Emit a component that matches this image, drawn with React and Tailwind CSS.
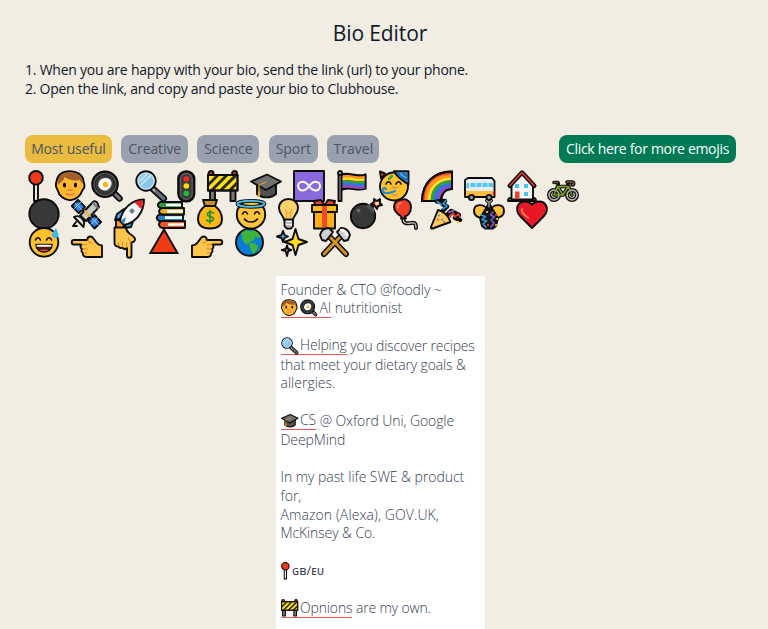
import React from "react";

const INK = "#0c0c0c";

function Svg({ children, className = "h-8 w-8" }) {
  return (
    <svg viewBox="0 0 32 32" className={className + " shrink-0 overflow-visible"} fill="none" stroke={INK} strokeWidth="1.9" strokeLinejoin="round" strokeLinecap="round">
      {children}
    </svg>
  );
}

const Pin = (p) => (
  <Svg {...p}>
    <path d="M6 12h4v19H6z" fill="#d4d4d4" />
    <path d="M8 14v14" stroke="#fff" strokeWidth="1" />
    <circle cx="8" cy="7.800" r="6.800" fill="#ef3a18" />
  </Svg>
);
const Face = (p) => (
  <Svg {...p}>
    <path d="M1.500 11C3 3 9 1.200 15 1.200S28 4 28.600 12c1.300 3 1 6-1 8-2 6-7 10.200-12.600 10.200S4 26 2.600 20C.5 17 .5 14 1.500 11z" fill="#ffb92e" />
    <path d="M2.600 15C2 6 8 2.200 15 2.200S27.500 6 27.600 14l-3-4c-5 1-11 0-15-3-1 4-4 5-7 8z" fill="#a45d2c" stroke="none" />
    <ellipse cx="9.500" cy="15" rx="1.600" ry="2.600" fill={INK} stroke="none" />
    <ellipse cx="20.500" cy="15" rx="1.600" ry="2.600" fill={INK} stroke="none" />
    <path d="M13 20h4M11.500 24c2 1 5 1 7 0" stroke="#ef7348" strokeWidth="1.700" />
  </Svg>
);
const Pan = (p) => (
  <Svg {...p}>
    <path d="M22 22l6.500 6.500" stroke={INK} strokeWidth="6.500" />
    <path d="M23 23l5.500 5.500" stroke="#777" strokeWidth="3" />
    <circle cx="14" cy="14.300" r="12.700" fill="#555" strokeWidth="2.200" />
    <circle cx="14" cy="14.300" r="9.800" fill="#393939" stroke="#222" strokeWidth="1" />
    <path d="M14 8c4-.5 7 2.500 6.500 6S17 21 13.500 20.500 6.500 17 7.500 13.500 10 8.500 14 8z" fill="#fff" stroke="none" />
    <circle cx="14.500" cy="14.500" r="2.700" fill="#ffb510" stroke="none" />
  </Svg>
);
const Magnifier = (p) => (
  <Svg {...p}>
    <path d="M18 19l10.500 9.500" strokeWidth="7" />
    <path d="M18 19l2 2" stroke="#aaa" strokeWidth="3" />
    <path d="M21.500 22l7 6.500" stroke="#66717d" strokeWidth="3.600" />
    <circle cx="11" cy="11" r="9.700" fill="#87c5ea" />
    <circle cx="11" cy="11" r="8" stroke="#d7e6ee" strokeWidth="1.200" />
    <path d="M5.500 10.500l6-6M6.500 14.500l9-9" stroke="#bee4f5" strokeWidth="1.800" />
  </Svg>
);
const Traffic = (p) => (
  <Svg {...p}>
    <rect x="1.300" y="1.300" width="16" height="30" rx="7.500" fill="#3c3c3c" strokeWidth="2.200" />
    <rect x="3.500" y="3.500" width="11.600" height="25.600" rx="5.500" stroke="#777" strokeWidth=".7" />
    <g stroke="none">
      <circle cx="9.300" cy="9" r="2.800" fill="#f42821" />
      <circle cx="9.300" cy="16" r="2.800" fill="#ffdc15" />
      <circle cx="9.300" cy="23.200" r="2.800" fill="#1bbb33" />
    </g>
  </Svg>
);
const Barrier = (p) => (
  <Svg {...p}>
    <path d="M3 20h5v11H3zM23.500 20h5v11h-5z" fill="#777" />
    <circle cx="4" cy="3.500" r="2.500" fill="#c62f27" />
    <circle cx="27.500" cy="3.500" r="2.500" fill="#c62f27" />
    <path d="M1 5h29.500v15.500H1z" fill="#ffdf19" />
    <path d="M2 12l6-6h4L2 16zM3 20L17 6h4L7 20zM12 20L26 6h3.500v1L16 20zM21 20l8.500-8.500v4L25 20z" fill="#292929" stroke="none" />
    <path d="M1 5h29.500v15.500H1z" />
  </Svg>
);
const Cap = (p) => (
  <Svg {...p}>
    <path d="M7 13v11c5 4.500 14 4.500 19 0V13z" fill="#505050" />
    <path d="M1 11.500L17 4.500l14 7-15 8.500z" fill="#707070" />
    <path d="M16 12l-7 3v9" stroke="#e89c20" strokeWidth="1.200" />
    <path d="M9 22v4" stroke="#e89c20" strokeWidth="2.200" />
  </Svg>
);
const Infinity8 = (p) => (
  <Svg {...p}>
    <path d="M1 1h30v30H1z" fill="#8a69de" />
    <path d="M16 16c-3-4-5-5-7.500-5a5 5 0 000 10c2.500 0 4.500-1 7.500-5s5-5 7.500-5a5 5 0 010 10c-2.500 0-4.500-1-7.500-5z" stroke="#fff" strokeWidth="2.200" transform="translate(2 2) scale(.88)" />
  </Svg>
);
const Flag = (p) => (
  <Svg {...p}>
    <path d="M4 5c8-4 14 3 24.500-.5v14C19 22 12 15 4 20z" fill="#ef3340" strokeWidth="2.200" />
    <g strokeWidth="2.400" strokeLinecap="butt">
      <path d="M5 7c8-3 14 3 22.600 0" stroke="#ff931e" />
      <path d="M5 9.300c8-3 14 3 22.600 0" stroke="#ffe020" />
      <path d="M5 12c8-3 14 3 22.600 0" stroke="#25a744" />
      <path d="M5 14.400c8-3 14 3 22.600 0" stroke="#2878ed" />
      <path d="M5 17c8-3 14 3 22.600 0" stroke="#8950c6" />
    </g>
    <path d="M1.500 3.500h3V31h-3z" fill="#999" />
    <circle cx="3" cy="3" r="2" fill="#bbb" />
  </Svg>
);
const Party = (p) => (
  <Svg {...p}>
    <circle cx="16" cy="16.500" r="14" fill="#ffc02e" />
    <path d="M16 1.200h14.500v13C28 13 19 7 16 1.200z" fill="#4a9fe0" />
    <path d="M20 2.500c1 4 5 6.500 9.500 7.500M25 2.500c1 2 2.500 3 4.500 3.500" stroke="#1768ad" strokeWidth="2" />
    <path d="M2 1.500l5 2-4 5z" fill="#f36c21" />
    <path d="M11 9l3-3" stroke="#28a745" strokeWidth="2.500" />
    <path d="M8 14c1-3 4-3 5 0M18 14c1-3 4-3 5 0" strokeWidth="1.600" />
    <path d="M17 21c-4 2-10 3-12 1s1-5 3-3" stroke="#258bd2" strokeWidth="2.200" />
    <path d="M14 17.500h5M15 25h4" stroke="#ef8640" strokeWidth="1.600" />
  </Svg>
);
const Rainbow = (p) => (
  <Svg {...p}>
    <path d="M1 31C1 13 13 1.500 31 1.500V19c-7 0-11 5-11 12z" fill="#ef3b32" />
    <g strokeWidth="3.100" strokeLinecap="butt">
      <path d="M5.200 30.200C5.200 14.500 15 5.800 30.200 5.700" stroke="#ff951e" />
      <path d="M8.200 30.200C8.200 17 17 8.800 30.200 8.700" stroke="#ffdf21" />
      <path d="M11.200 30.200C11.200 19 19 11.800 30.200 11.700" stroke="#23a54c" />
      <path d="M14.200 30.200C14.200 21 21 14.800 30.200 14.700" stroke="#2878ed" />
      <path d="M17.500 30.200C17.500 22.500 22.500 17.500 30.200 17.400" stroke="#8950c6" />
    </g>
    <path d="M1 31C1 13 13 1.500 31 1.500V19c-7 0-11 5-11 12z" />
  </Svg>
);
const Bus = (p) => (
  <Svg {...p}>
    <path d="M4 8h24l2.500 3v16H1V10z" fill="#e9ecef" />
    <path d="M2 21h27.500v5H2z" fill="#ffbd39" stroke="none" />
    <path d="M2.500 13H5v5H2.500zM6.500 13h5v4h-5zM12.500 13h5v4h-5zM18.500 13h5v4h-5zM24.500 13h4.500v4h-4.500z" fill="#4cc9f4" stroke="none" />
    <circle cx="7.500" cy="27.500" r="2.600" fill="#999" />
    <circle cx="25" cy="27.500" r="2.600" fill="#999" />
    <path d="M29.500 22.500v2" stroke="#e52a28" strokeWidth="1.600" />
  </Svg>
);
const House = (p) => (
  <Svg {...p}>
    <path d="M1 31c0-4 3-3 5-3h18c3 0 5-1 5 3z" fill="#29a33b" />
    <path d="M4.500 15L15 3l11 12v14.500H4.500z" fill="#f5f5f5" />
    <path d="M2.800 15.800L15 2.500l12.200 13.300" strokeWidth="4.400" />
    <path d="M3 15.500L15 2.500l12 13" stroke="#e63b31" strokeWidth="1.700" />
    <path d="M8 21.500h4.500V29H8z" fill="#e64532" stroke="none" />
    <path d="M8 14h4v4H8zM17 14h4v4h-4zM17 22h4v4h-4z" fill="#45c5ef" stroke="none" />
  </Svg>
);
const Bike = (p) => (
  <Svg {...p}>
    <g strokeWidth="4.200">
      <circle cx="7" cy="25" r="4.900" />
      <circle cx="25" cy="25" r="4.900" />
    </g>
    <path d="M7 25l3.500-8.500h11L25 25M10.500 16.500l5.500 8.500 5.500-8.500M16 25H8M7 12.500h4l.5 4M20 12h5c2.500 0 2 3 0 3M21 12v4" strokeWidth="3.600" />
    <circle cx="7" cy="25" r="4.900" stroke="#b4b4b4" strokeWidth="1.700" />
    <circle cx="25" cy="25" r="4.900" stroke="#b4b4b4" strokeWidth="1.700" />
    <path d="M7 25l3.500-8.500h11L25 25M10.500 16.500l5.500 8.500 5.500-8.500M16 25H8" stroke="#83a51b" strokeWidth="1.400" />
    <path d="M7 12.500h4M20 12h5c2.500 0 2 3 0 3" stroke="#7b512c" strokeWidth="1.600" />
  </Svg>
);
const Ball = (p) => (
  <Svg {...p}>
    <circle cx="16" cy="16" r="14.700" fill="#393939" />
  </Svg>
);
const Satellite = (p) => (
  <Svg {...p}>
    <path d="M8 8l16 18" strokeWidth="3" />
    <path d="M.8 8L7 1.800l7 7-6.300 6.300zM17 23l6.500-6 6.500 7-6.500 6.500z" fill="#2d83e5" />
    <path d="M4 5l7 7M3.500 10.500l7-7M20.500 20l7 7M20 26.500l7-7" stroke="#a5d4fa" strokeWidth=".9" />
    <path d="M9 17.500L22 4c2-2 5 .5 5 3l1 2-13 14z" fill="#c7c7c7" />
    <path d="M14 13l5 5" stroke="#edb434" strokeWidth="2" />
    <path d="M22 5l5 5" stroke="#777" strokeWidth="2" />
    <path d="M3 19c6-3 12 3 9.500 10zM5 24l-3 4h4" fill="#ddd" />
  </Svg>
);
const Rocket = (p) => (
  <Svg {...p}>
    <path d="M2 22v8c4 1 7 0 9-2l-4-6z" fill="#ff9b27" />
    <path d="M10 11L3 16l-2 6 8-2M20 20l-3 9-6 1 1-8" fill="#35a8dd" />
    <path d="M6 23C8 11 17 2 30 1.500 30 15 21 25 10 27z" fill="#f7f7f7" />
    <path d="M20 3.800c4-1.300 7-1.500 9-1.300 0 4-.5 6.500-2 8.500z" fill="#e8222d" stroke="none" />
    <path d="M10 26.500l-3.500-3.500 5.500-4z" fill="#2589c9" stroke="none" />
    <circle cx="18" cy="13" r="2.300" fill="#58717d" stroke="#a6b6be" strokeWidth="1" />
  </Svg>
);
const Books = (p) => (
  <Svg {...p}>
    <path d="M3 4h22v6H3c-3-2-3-4 0-6z" fill="#2c9e38" />
    <path d="M5 23h23v7H5c-4-2-4-5 0-7z" fill="#f15a24" />
    <path d="M2 16.500h24v6.500H2c-3-2-3-4.500 0-6.500z" fill="#2b7fc4" />
    <path d="M5 10h22v6.500H5c-4-2-4-4.500 0-6.500z" fill="#e7ae26" />
    <path d="M9 7h15M10 13.300h16M8 19.700h17M11 26.500h16" stroke="#fff" strokeWidth="2.700" strokeLinecap="butt" />
  </Svg>
);
const Money = (p) => (
  <Svg {...p}>
    <path d="M8 8C4 11 1 15 1 21c0 6 4 9.500 12 9.500S25 27 25 21c0-6-3-10-7-13z" fill="#ffb819" />
    <path d="M6 2h14l-2 6H8z" fill="#c9901c" />
    <path d="M16.500 15c-3-2-7-.5-6 2s6 1.200 6 3.700-4 3.800-7 1.300M13 12.500v12.500" stroke="#25952f" strokeWidth="1.700" />
  </Svg>
);
const Halo = (p) => (
  <Svg {...p}>
    <circle cx="16" cy="16.500" r="14.200" fill="#ffc43b" />
    <ellipse cx="16" cy="5.800" rx="13.500" ry="3" strokeWidth="3.800" />
    <ellipse cx="16" cy="5.800" rx="13.500" ry="3" stroke="#4ebee5" strokeWidth="1.900" />
    <path d="M7.500 16c1-3 4-3 5 0M19.500 16c1-3 4-3 5 0M9.500 21c3 4 10 4 13 0" strokeWidth="1.600" />
  </Svg>
);
const Bulb = (p) => (
  <Svg {...p}>
    <path d="M6 22c0-4-5-6-5-12C1 4.500 5 1 10.500 1S20 4.500 20 10c0 6-5 8-5 12z" fill="#ffd16c" />
    <path d="M8.500 20v-6l-1-2M12.500 20v-6l1-2M8 15h5" stroke="#ef9c2c" strokeWidth="1.200" />
    <path d="M6.500 21.500h8.500V28l-2 2.500H9L6.500 28z" fill="#eee" />
    <path d="M8 25h6M8 28h5" stroke="#888" strokeWidth="1" />
  </Svg>
);
const Gift = (p) => (
  <Svg {...p}>
    <path d="M3 12h21v18.500H3z" fill="#ffae17" />
    <path d="M1 7h25v7H1z" fill="#ffb923" />
    <path d="M11 7h5v22.500h-5z" fill="#ed4c2c" stroke="none" />
    <path d="M13.500 7L10 2 3 3l1 4zM13.500 7L17 2l7 1-1 4z" fill="#ef4030" />
  </Svg>
);
const Bomb = (p) => (
  <Svg {...p}>
    <path d="M21 9l6-4" strokeWidth="4" />
    <path d="M24 1l3 2 3-2v4l2 2-4 1-1 3-3-4-3-1 3-2z" fill="#f44736" />
    <circle cx="27" cy="5.500" r="1.800" fill="#fff1a0" stroke="none" />
    <circle cx="13" cy="18" r="12.200" fill="#383838" />
    <path d="M19 6l6 6-2 3-7-7z" fill="#505050" stroke="none" />
    <circle cx="8.500" cy="12.500" r="2" fill="#666" stroke="none" />
  </Svg>
);
const Balloon = (p) => (
  <Svg {...p}>
    <path d="M11 20c-2 5 2 6 7 5s5 2 5 5" strokeWidth="4" />
    <path d="M11 20c-2 5 2 6 7 5s5 2 5 5" stroke="#bbb" strokeWidth="1.300" />
    <path d="M9 1.500C14 .5 18 4 18 9c0 5-3 9-6 9.500l1 2H8l.5-2C4 16 1 13 1 8.500 1 4.500 4 2 9 1.500z" fill="#ef3d28" />
    <path d="M5 10c-1-3 1-5 3-5" stroke="#ff8b6d" strokeWidth="1.600" />
  </Svg>
);
const Popper = (p) => (
  <Svg {...p}>
    <path d="M7 3.500l8-.5-2 3.500 4 2-4 4M17 17l4-4 8 4-4 3 5 2" strokeWidth="4.500" />
    <path d="M7 3.500l4 3M16 2.500l-3 3 4 2.500-4 3" stroke="#2a9ae2" strokeWidth="1.700" />
    <path d="M19 14l4-1" stroke="#8950c6" strokeWidth="2" />
    <path d="M20 19l3-4 2 4 3-3 2 3" stroke="#db382f" strokeWidth="1.700" />
    <path d="M8 12c5 1 11 6 12.500 12L2.500 30.500c-1 .3-1.800-.5-1.500-1.500z" fill="#ffc95c" />
    <path d="M9 17.500h.1M12 21.500h.1" stroke="#32a7da" strokeWidth="2.200" />
    <path d="M8 21.500h.1M14 24h.1" stroke="#ef4d35" strokeWidth="1.800" />
    <path d="M28 24h.1" stroke="#ffc520" strokeWidth="2.500" />
  </Svg>
);
const Confetti = (p) => (
  <Svg {...p}>
    <path d="M14 11C11 6 1 5 1 13c0 5 5 8 11 6zM18 11c3-5 13-6 13 2 0 5-5 8-11 6z" fill="#ffc23b" />
    <path d="M16 5l4 7 5 8-2 8-3 2.500h-8L9 28l-2-8 5-8z" fill="#171717" />
    <path d="M13.500 2.500l2.500 2 2.500-2M16 5v4" stroke={INK} strokeWidth="3" />
    <path d="M13.500 2.500l2.500 2 2.500-2M16 5v4" stroke="#b0b0b0" strokeWidth="1.200" />
    <path d="M8 17l4.500 1.500-3.500 3 4.500 1.500-3.500 3 3 3" stroke="#2ba0e0" strokeWidth="1.600" />
    <path d="M20 14l-2.500 3 4 2-3.500 3 3 3-3 4" stroke="#7a59d1" strokeWidth="1.600" />
    <path d="M14 14h.1M24 21h.1M23 27h.1" stroke="#ffc520" strokeWidth="2.200" />
    <path d="M23 17h.1M15 27h.1" stroke="#ef372f" strokeWidth="2.200" />
  </Svg>
);
const Heart = (p) => (
  <Svg {...p}>
    <path d="M16 30L4 18C-2 11 2 3.500 9 3.500c4 0 6 1.500 7 3.500 1-2 3-3.500 7-3.500 7 0 11 7.500 5 14.500z" fill="#e81728" />
    <path d="M6 11c-1 4 2 5 6 9" stroke="#f07857" strokeWidth="2" />
  </Svg>
);
const Sweat = (p) => (
  <Svg {...p}>
    <circle cx="16" cy="16.300" r="14.300" fill="#ffc12f" />
    <path d="M7.500 14c1-3 4-3 5 0M18.500 14c1-3 4-3 5 0" strokeWidth="1.600" />
    <path d="M8 18.500h16c0 5-4 7.500-8 7.500s-8-2.500-8-7.500z" fill="#501c1a" strokeWidth="1.500" />
    <path d="M9.500 19.700h13" stroke="#fff" strokeWidth="2" />
    <path d="M13 24.500h6" stroke="#e84842" strokeWidth="1.600" />
    <path d="M28 2c-2 3-4 5-4 7s1.500 3 3.500 3 3-1.500 3-4z" fill="#38b8ec" stroke="none" />
  </Svg>
);
const Hand = () => (
  <>
    <path d="M1 31V19.500c3 0 4-1 6-3.500 2-3 3.500-5.500 5.500-5.500S16 12 15.500 14H29c3 0 3 4.500 0 4.500h-7.500c1.500 1.500 1.300 3.500-.5 4.500 1 1.700.5 3.300-1 4 .3 2.500-1 4-3.500 4z" fill="#ffc54a" />
    <path d="M15.500 14c0 2-2 3-4 3M21 18.700h-4.500M20.500 23H16M19.500 27H16" stroke="#c98a26" strokeWidth="1" />
  </>
);
const HandRight = (p) => <Svg {...p}><Hand /></Svg>;
const HandLeft = (p) => <Svg {...p}><g transform="matrix(-1 0 0 1 32 0)"><Hand /></g></Svg>;
const HandDown = (p) => <Svg {...p}><g transform="matrix(0 1 -1 0 32.500 .5)"><Hand /></g></Svg>;
const Triangle = (p) => (
  <Svg {...p}>
    <path d="M15 3.500l13.500 23.500H1.300z" fill="#ef3b16" strokeLinejoin="miter" />
  </Svg>
);
const Globe = (p) => (
  <Svg {...p}>
    <circle cx="14.500" cy="16.300" r="13.500" fill="#087bd7" />
    <path d="M7 6l5-2.500 3 2 3-1.500 5 2.500 3 5-3 1-2-2-2 1 1 2-4 2-1.500 2-2-.5 1 2-3-1-3-4-1-5zM14 18l4-1.500 5 3-1 4-4 5-2.500-5zM24 22l1 2-2 2z" fill="#3cb43c" stroke="none" />
  </Svg>
);
const Sparkles = (p) => (
  <Svg {...p}>
    <path d="M19.500 3l3 10 8.500 3-8.500 3-3 10-3-10-8-3 8-3z" fill="#ffdc1d" />
    <path d="M7 5l1.500 4L12 10.500 8.500 12 7 16l-1.500-4L1 10.500 5.500 9z" fill="#42b8e3" />
    <path d="M11 19.500l1.200 3.500 3 1-3 1.200L11 30l-1.200-4.800-4-1.200 4-1z" fill="#ef8a91" />
  </Svg>
);
const Hammers = (p) => (
  <Svg {...p}>
    <path d="M9 9l18 19M23 9L5 28" strokeWidth="6" />
    <path d="M10 10l17 18M22 10L5 28" stroke="#d9941c" strokeWidth="2.800" />
    <path d="M1 9c1-4 4-7 9-7l4 4-7 9-4-1zM31 9c-1-4-4-7-9-7l-4 4 7 9 4-1z" fill="#cfd0d1" />
    <path d="M22 4c3 0 5 2 6 5" stroke="#fff" strokeWidth="2.500" />
  </Svg>
);

const rows = [
  [[Pin, "w-[27.500px]"], [Face, "w-9"], [Pan, "w-[43.500px]"], [Magnifier, "w-[42.500px]"], [Traffic, "w-[30px]"], [Barrier, "w-[43px]"], [Cap, "w-[43px]"], [Infinity8, "w-11"], [Flag, "w-[41px]"], [Party, "w-[43px]"], [Rainbow, "w-[43px]"], [Bus, "w-[43px]"], [House, "w-10"], [Bike, "w-8"]],
  [[Ball, "w-[43.500px]"], [Satellite, "w-[43px]"], [Rocket, "w-[43px]"], [Books, "w-10"], [Money, "w-[38px]"], [Halo, "w-[43px]"], [Bulb, "w-[33px]"], [Gift, "w-[39px]"], [Bomb, "w-[43px]"], [Balloon, "w-[37px]"], [Popper, "w-[43px]"], [Confetti, "w-[43px]"], [Heart, "w-8"]],
  [[Sweat, "w-[43.500px]"], [HandLeft, "w-[42px]"], [HandDown, "w-9"], [Triangle, "w-[42px]"], [HandRight, "w-11"], [Globe, "w-[41px]"], [Sparkles, "w-[43px]"], [Hammers, "w-8"]],
];

const tabs = [
  ["Most useful", "w-[87.500px] bg-[#eabc3f] tracking-[-0.15px]"],
  ["Creative", "w-[66.500px] bg-gray-400 tracking-[-0.1px]"],
  ["Science", "w-[62px] bg-gray-400 tracking-[-0.1px]"],
  ["Sport", "w-[49.500px] bg-gray-400"],
  ["Travel", "w-[52px] bg-gray-400"],
];

const Misspelt = ({ children }) => (
  <span className="inline-flex h-[18.500px] items-center border-b border-[#ee5555] align-top">{children}</span>
);
const small = "mr-[2px] h-[17.500px] w-[17.500px]";

export default function App() {
  return (
    <main className="h-[629px] w-[768px] overflow-hidden bg-[#f1ede3] pt-[18px] font-['Open_Sans','Noto_Sans',sans-serif] text-[14px] leading-[18.750px] text-gray-900">
      <h1 className="pr-2 text-center text-[21px] leading-[30px] tracking-[-0.1px]">Bio Editor</h1>
      <ol className="mt-[13px] ml-[25px] whitespace-nowrap">
        <li className="tracking-[-0.23px]">1. When you are happy with your bio, send the link (url) to your phone.</li>
        <li className="tracking-[-0.27px]">2. Open the link, and copy and paste your bio to Clubhouse.</li>
      </ol>
      <div className="mt-[36.500px] mr-8 ml-[24.700px] flex h-7 items-stretch justify-between">
        <nav className="flex gap-[9.300px]">
          {tabs.map(([label, style]) => (
            <button key={label} className={"shrink-0 rounded-lg text-center whitespace-nowrap text-gray-600 " + style}>{label}</button>
          ))}
        </nav>
        <button className="w-[177px] rounded-lg bg-emerald-700 text-center whitespace-nowrap tracking-[-0.32px] text-white">Click here for more emojis</button>
      </div>
      <section className="mt-[6.500px] ml-[27.700px] h-[106px]">
        {rows.map((row, i) => (
          <div key={i} className="flex h-7 items-start">
            {row.map(([Icon, width], j) => (
              <span key={j} className={"flex shrink-0 " + width}><Icon /></span>
            ))}
          </div>
        ))}
      </section>
      <article className="ml-[276px] h-[360px] w-[209px] bg-white pt-[5px] pl-[4.500px] font-[350] whitespace-nowrap text-gray-700">
        <p className="tracking-[-0.1px]">Founder &amp; CTO @foodly ~</p>
        <p className="tracking-[-0.1px]"><Misspelt><Face className={small} /><Pan className={small} />AI</Misspelt> nutritionist</p>
        <br />
        <p className="tracking-[-0.18px]"><Misspelt><Magnifier className={small} />Helping</Misspelt> you discover recipes</p>
        <p className="tracking-[-0.15px]">that meet your dietary goals &amp;</p>
        <p>allergies.</p>
        <br />
        <p className="tracking-[-0.1px]"><Misspelt><Cap className={small} />CS</Misspelt> @ Oxford Uni, Google</p>
        <p className="tracking-[-0.1px]">DeepMind</p>
        <br />
        <p className="tracking-[-0.06px]">In my past life SWE &amp; product</p>
        <p>for,</p>
        <p className="tracking-[0.1px]">Amazon (Alexa), GOV.UK,</p>
        <p className="tracking-[-0.12px]">McKinsey &amp; Co.</p>
        <br />
        <p className="flex items-center"><Pin className="-mr-[6px] h-[17.500px] w-[17.500px]" /><span className="font-['Noto_Sans',sans-serif] text-[12.500px] font-normal">ɢʙ/ᴇᴜ</span></p>
        <br />
        <p className="tracking-[-0.15px]"><Misspelt><Barrier className={small} />Opnions</Misspelt> are my own.</p>
      </article>
    </main>
  );
}
